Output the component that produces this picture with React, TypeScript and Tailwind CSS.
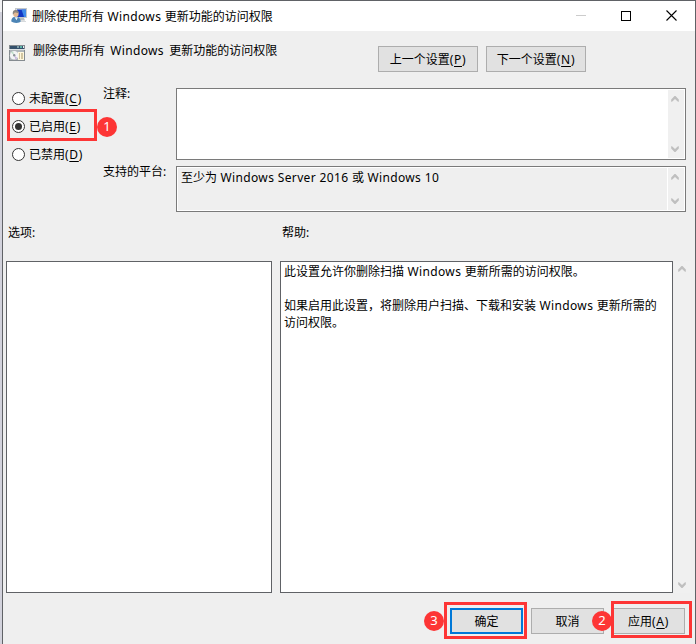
import type { ReactNode } from 'react';

function Latin({ children, className = 'tracking-[0.36px]' }: { children: ReactNode; className?: string }) {
  return (
    <span className={`font-['Noto_Sans','Noto_Sans_CJK_SC',sans-serif] text-[12px] leading-none ${className}`}>
      {children}
    </span>
  );
}

function Chevron({ down = false }: { down?: boolean }) {
  return (
    <svg width="8" height="6" viewBox="0 0 8 6" className={down ? 'rotate-180' : ''}>
      <path d="M0.200 5.800V3.600L3.500 0H4.500L7.800 3.600V5.800L7 5.800L4 2.900L1 5.800Z" fill="#bfbfbf" />
    </svg>
  );
}

function ScrollBar({ className = '' }: { className?: string }) {
  return (
    <div className={`flex flex-col items-center justify-between bg-[#f0f0f0] pr-[2px] ${className}`}>
      <Chevron />
      <Chevron down />
    </div>
  );
}

function Radio({ label, hotkey, checked = false }: { label: string; hotkey: string; checked?: boolean }) {
  return (
    <label className="flex h-[28px] items-center">
      <span className="flex size-[13px] items-center justify-center rounded-full border border-[#333] bg-white">
        {checked && <span className="size-[7px] rounded-full bg-[#333]" />}
      </span>
      <span className="ml-[4px] pb-[2px]">
        {label}
        <Hotkey k={hotkey} />
      </span>
    </label>
  );
}

function Hotkey({ k }: { k: string }) {
  return (
    <Latin className="tracking-[0.7px]">
      (<span className="underline underline-offset-2">{k}</span>)
    </Latin>
  );
}

function Badge({ n, className }: { n: number; className: string }) {
  return (
    <span
      className={`absolute flex size-[20px] items-center justify-center rounded-full bg-[#fd3535] pb-px font-['Noto_Sans',sans-serif] text-[13px] text-white ${className}`}
    >
      {n}
    </span>
  );
}

function Button({ children, className = '' }: { children: ReactNode; className?: string }) {
  return (
    <button className={`flex h-[26px] items-center justify-center bg-[#e1e1e1] ${className || 'w-[100px] border border-[#adadad]'}`}>
      <span className="pb-[2px]">{children}</span>
    </button>
  );
}

function UserMonitorIcon() {
  return (
    <svg width="16" height="16" viewBox="0 0 16 16">
      <rect x="4.500" y="0.500" width="11" height="9" fill="#d9dde0" stroke="#c3c8cb" />
      <rect x="6" y="1.500" width="9" height="7.500" fill="#1238c4" />
      <path d="M10.500 1.500H15V9h-2z" fill="#3f8bea" />
      <path d="M9 10h4l1 2.500H8z" fill="#b8bdc0" />
      <path d="M9 13h6v1H9z" fill="#d7dadd" />
      <path d="M0.300 13.500c0-3.500 2-4.700 4.400-4.700s5 1 5 4.700c-1 1.700-7 2-9.400 0z" fill="#4c84b5" />
      <path d="M3.500 9.200l2 3 1.500-3z" fill="#eef4fa" />
      <ellipse cx="4.900" cy="5.800" rx="2.700" ry="3.300" fill="#e2b893" />
      <path d="M1.800 6.500C1.300 3 3 1.600 5 2c2 .2 2.800 1.500 2.600 3C5.500 5 4 3.800 3.500 4.800 2.900 5.200 2.900 6.500 1.800 6.500z" fill="#8a8580" />
    </svg>
  );
}

function SettingIcon() {
  return (
    <svg width="16" height="16" viewBox="0 0 16 16">
      <rect width="16" height="16" fill="#858b90" />
      <rect x="1" y="1" width="14" height="3" fill="#34506b" />
      <rect x="8" y="1" width="2" height="2" fill="#7fa0aa" />
      <rect x="11" y="1" width="2" height="2" fill="#5cb5a7" />
      <rect x="14" y="1" width="1" height="2" fill="#e9eef0" />
      <rect x="0" y="4" width="16" height="1" fill="#dde2e4" />
      <rect x="1" y="5" width="14" height="10" fill="#aeb5b9" />
      <circle cx="5.200" cy="10.300" r="4.300" fill="#f3f4f5" />
      <path d="M5.200 10.300L2 7.500a4.300 4.300 0 0 1 2-1.300z" fill="#bfe0c8" />
      <path d="M5.200 10.300l3.200 2.800a4.300 4.300 0 0 1-2 1.300z" fill="#c9b8e0" />
      <circle cx="5.200" cy="10.300" r="1.200" fill="#8b9398" />
      <rect x="9" y="7" width="6" height="8" fill="#fff7dc" />
      <path d="M10 8.500h1v1h-1zM12 8.500h2v1h-2zM10 10.500h1v1h-1zM12 10.500h2v1h-2zM10 12.500h1v1h-1zM12 12.500h2v1h-2z" fill="#a39468" />
    </svg>
  );
}

export default function App() {
  return (
    <div className="h-[644px] w-[696px] overflow-hidden bg-linear-to-b from-[#f2f2f4] from-[12px] to-[#d2d2dc] to-[12px] pl-[2px] font-['Noto_Sans_CJK_SC',sans-serif] text-[12px] leading-[17px] text-black">
      <div className="relative flex h-[644px] flex-col border-x border-t border-[#606266] bg-[#efefef]">
        <header className="flex h-[30px] shrink-0 items-center bg-white pl-[8px]">
          <UserMonitorIcon />
          <h1 className="ml-[5px] pb-[2px] whitespace-pre">
            删除使用所有<Latin> Windows </Latin>更新功能的访问权限
          </h1>
          <div className="ml-auto flex items-center gap-[35px] pr-[18px] pb-px">
            <span className="h-px w-[10px] bg-[#ccc]" />
            <span className="size-[10px] border border-black" />
            <svg width="11" height="11" viewBox="0 0 11 11">
              <path d="M0.500 0.500L10.500 10.500M10.500 0.500L0.500 10.500" stroke="#000" strokeWidth="1.100" />
            </svg>
          </div>
        </header>

        <section className="flex h-[57px] shrink-0 items-start pl-[6px]">
          <div className="mt-[14px]">
            <SettingIcon />
          </div>
          <h2 className="mt-[10px] ml-[8px] w-[345px] whitespace-pre">
            删除使用所有<Latin className="tracking-[0.36px] [word-spacing:1.7px]"> Windows </Latin>更新功能的访问权限
          </h2>
          <div className="mt-[15px] flex gap-[8px]">
            <Button>上一个设置<Hotkey k="P" /></Button>
            <Button>下一个设置<Hotkey k="N" /></Button>
          </div>
        </section>

        <section className="flex h-[124px] shrink-0">
          <div className="w-[100px] pl-[9px]">
            <div className="-mt-[4px]">
              <Radio label="未配置" hotkey="C" />
              <Radio label="已启用" hotkey="E" checked />
              <Radio label="已禁用" hotkey="D" />
            </div>
          </div>
          <div className="flex w-[583px] flex-col gap-[6px]">
            <div className="flex h-[72px]">
              <span className="-mt-[4px] w-[73px]">注释<Latin>:</Latin></span>
              <div className="flex flex-1 justify-end border border-[#7a7a7a] bg-white p-px">
                <ScrollBar className="w-[16px] py-[6px]" />
              </div>
            </div>
            <div className="flex h-[46px]">
              <span className="-mt-[4px] w-[73px]">支持的平台<Latin>:</Latin></span>
              <div className="flex flex-1 border border-[#7a7a7a] bg-white p-px">
                <p className="mr-px flex-1 bg-[#efefef] pl-[3px] whitespace-pre">
                  至少为<Latin> Windows Server 2016 </Latin>或<Latin> Windows 10</Latin>
                </p>
                <ScrollBar className="w-[16px] py-[6px]" />
              </div>
            </div>
          </div>
        </section>

        <div className="flex h-[49px] shrink-0 pt-[11px] pl-[5px]">
          <span className="w-[274px]">选项<Latin>:</Latin></span>
          <span>帮助<Latin>:</Latin></span>
        </div>

        <section className="flex h-[332px] shrink-0 pl-[3px]">
          <div className="w-[266px] border border-[#606266] bg-white" />
          <div className="ml-[8px] w-[393px] border border-[#606266] bg-white pl-[3px] whitespace-pre">
            <p className="h-[17px]">此设置允许你删除扫描<Latin> Windows </Latin>更新所需的访问权限。</p>
            <p className="mt-[17px] h-[17px]">如果启用此设置，将删除用户扫描、下载和安装<Latin> Windows </Latin>更新所需的</p>
            <p className="h-[17px]">访问权限。</p>
          </div>
          <ScrollBar className="ml-px w-[17px] py-[5px]" />
        </section>

        <footer className="flex pt-[15px] pl-[447px]">
          <Button className="w-[73px] border-2 border-[#0078d7]">确定</Button>
          <Button className="ml-[8px] w-[73px] border border-[#adadad]">取消</Button>
          <Button className="ml-[8px] w-[73px] border border-[#adadad]">应用<Hotkey k="A" /></Button>
        </footer>

        <div className="absolute top-[108px] left-[4px] h-[32px] w-[90px] border-3 border-[#fd3535]" />
        <div className="absolute top-[601px] left-[441px] h-[37px] w-[83px] border-3 border-[#fd3535]" />
        <div className="absolute top-[600px] left-[608px] h-[37px] w-[81px] border-3 border-[#fd3535]" />
        <Badge n={1} className="top-[116px] left-[94px]" />
        <Badge n={2} className="top-[610px] left-[589px]" />
        <Badge n={3} className="top-[610px] left-[421px]" />
      </div>
    </div>
  );
}
